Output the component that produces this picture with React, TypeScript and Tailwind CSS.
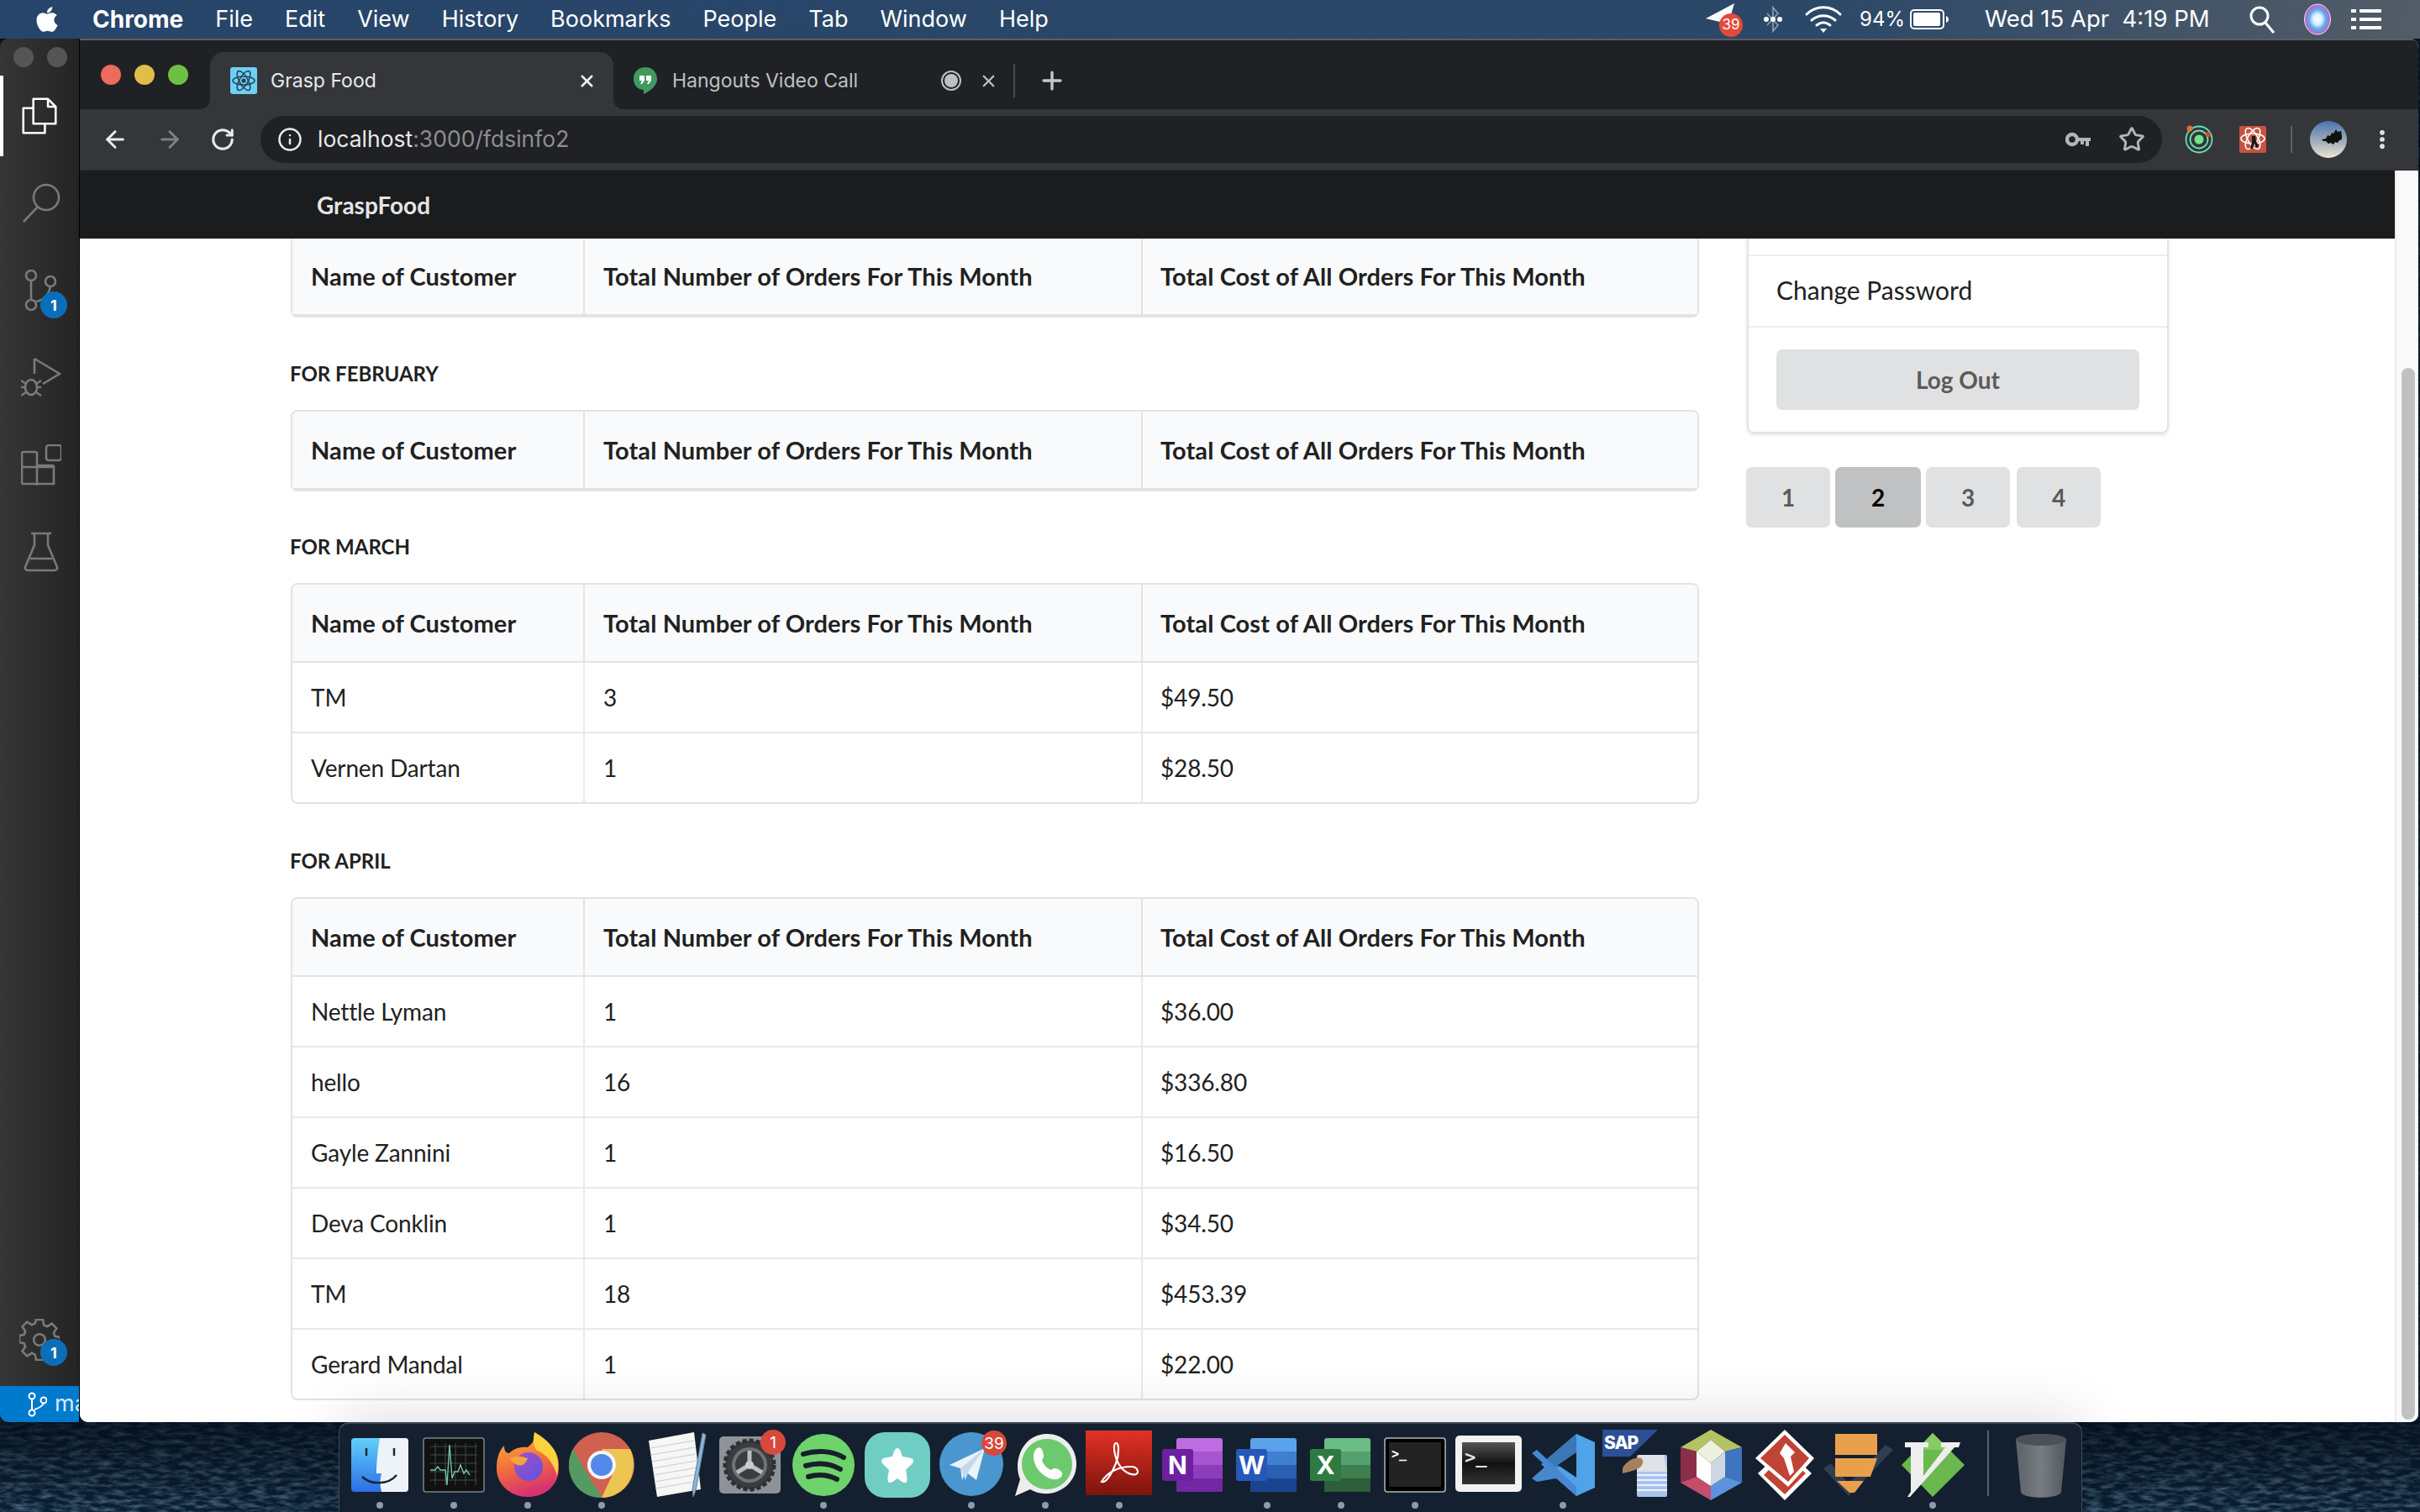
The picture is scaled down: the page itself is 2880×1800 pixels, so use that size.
import { ArrowLeft, ArrowRight, EllipsisVertical, Info, Plus, RotateCw, Star, X } from "lucide-react";
import { FaApple } from "react-icons/fa";

const customerHeaders = [
  "Name of Customer",
  "Total Number of Orders For This Month",
  "Total Cost of All Orders For This Month",
];

const marchRows = [
  ["TM", "3", "$49.50"],
  ["Vernen Dartan", "1", "$28.50"],
];

const aprilRows = [
  ["Nettle Lyman", "1", "$36.00"],
  ["hello", "16", "$336.80"],
  ["Gayle Zannini", "1", "$16.50"],
  ["Deva Conklin", "1", "$34.50"],
  ["TM", "18", "$453.39"],
  ["Gerard Mandal", "1", "$22.00"],
];

function OrdersTable({ rows = [] }: { rows?: string[][] }) {
  return (
    <table className="w-[1676px] table-fixed border-separate border-spacing-0 rounded-[8px] border-2 border-[#e3e3e4] text-[28px] leading-[34px] tracking-[-0.15px] text-[#212121]">
      <colgroup>
        <col className="w-[348px]" />
        <col className="w-[664px]" />
        <col className="w-[660px]" />
      </colgroup>
      <thead>
        <tr>
          {customerHeaders.map((header, i) => (
            <th
              key={header}
              className={
                i === 2
                  ? "h-[93px] rounded-tr-[6px] border-b-2 border-[#e3e3e4] bg-[#f9fafb] px-[21px] text-left text-[29px] font-bold tracking-[0.1px]"
                  : i === 0
                    ? "h-[93px] rounded-tl-[6px] border-r-2 border-b-2 border-[#e3e3e4] bg-[#f9fafb] px-[22px] text-left text-[29px] font-bold tracking-[0.1px]"
                    : "h-[93px] border-r-2 border-b-2 border-[#e3e3e4] bg-[#f9fafb] px-[22px] text-left text-[29px] font-bold tracking-[0.1px]"
              }
            >
              {header}
            </th>
          ))}
        </tr>
      </thead>
      <tbody>
        {rows.map((row, r) => {
          const last = r === rows.length - 1;
          return (
            <tr key={row[0] + r}>
              <td className={last ? "h-[82px] border-r-2 border-[#e9e9e9] px-[22px]" : "h-[84px] border-r-2 border-b-2 border-[#e9e9e9] px-[22px]"}>{row[0]}</td>
              <td className={last ? "h-[82px] border-r-2 border-[#e9e9e9] px-[22px]" : "h-[84px] border-r-2 border-b-2 border-[#e9e9e9] px-[22px]"}>{row[1]}</td>
              <td className={last ? "h-[82px] border-[#e9e9e9] px-[21px]" : "h-[84px] border-b-2 border-[#e9e9e9] px-[21px]"}>{row[2]}</td>
            </tr>
          );
        })}
      </tbody>
    </table>
  );
}

function MonthLabel({ children, className }: { children: React.ReactNode; className: string }) {
  return <div className={"-ml-px flex h-[30px] items-center text-[24px] font-bold text-[#212121] " + className}>{children}</div>;
}

function Sidebar() {
  return (
    <div className="ml-[56px] flex w-[430px] flex-col">
      <div className="ml-px w-[502px] rounded-b-[8px] border-x-2 border-b-2 border-[#e3e3e4] shadow-[0_2px_4px_rgba(34,36,38,0.12)]">
        <div className="h-[21px] border-b-2 border-[#ececec]" />
        <div className="flex h-[85px] items-center border-b-2 border-[#ececec] pb-[3px] pl-[33px] text-[30px] text-[#212121]">Change Password</div>
        <div className="px-[33px] pt-[26px] pb-[26px]">
          <div className="flex h-[72px] w-[432px] items-center justify-center rounded-[7px] bg-[#e0e1e2] text-[28px] font-bold text-[#5a5a5a]">Log Out</div>
        </div>
      </div>
      <div className="mt-[40px] flex w-[500px] gap-[6px] text-[28px] font-bold text-[#5a5a5a]">
        <div className="flex h-[72px] w-[100px] items-center justify-center rounded-[7px] bg-[#e0e1e2]">1</div>
        <div className="flex h-[72px] w-[102px] items-center justify-center rounded-[7px] bg-[#c0c1c2] text-black">2</div>
        <div className="flex h-[72px] w-[100px] items-center justify-center rounded-[7px] bg-[#e0e1e2]">3</div>
        <div className="ml-[2px] flex h-[72px] w-[100px] items-center justify-center rounded-[7px] bg-[#e0e1e2]">4</div>
      </div>
    </div>
  );
}

function PageContent() {
  return (
    <div className="flex min-h-0 flex-1">
      <div className="flex min-w-0 flex-1 overflow-hidden bg-white pl-[251px] font-['Lato',sans-serif]">
        <div className="-mt-[3px] flex w-[1676px] flex-col">
          <OrdersTable />
          <MonthLabel className="mt-[52px] mb-[28px]">FOR FEBRUARY</MonthLabel>
          <OrdersTable />
          <MonthLabel className="mt-[51px] mb-[28px]">FOR MARCH</MonthLabel>
          <OrdersTable rows={marchRows} />
          <MonthLabel className="mt-[53px] mb-[28px]">FOR APRIL</MonthLabel>
          <OrdersTable rows={aprilRows} />
        </div>
        <Sidebar />
      </div>
    </div>
  );
}

function Scrollbar() {
  return (
    <div className="w-[28px] border-l-2 border-[#ececec] bg-[#fafafa] pt-[235px] pl-[6px]">
      <div className="h-[1252px] w-[16px] rounded-full bg-[#c1c1c1]" />
    </div>
  );
}

function ReactFavicon() {
  return (
    <svg width="32" height="32" viewBox="0 0 32 32" className="shrink-0">
      <rect width="32" height="32" rx="3" fill="#6fd0f6" />
      <g fill="none" stroke="#23424f" strokeWidth="1.5">
        <ellipse cx="16" cy="16" rx="13" ry="5" />
        <ellipse cx="16" cy="16" rx="13" ry="5" transform="rotate(60 16 16)" />
        <ellipse cx="16" cy="16" rx="13" ry="5" transform="rotate(120 16 16)" />
      </g>
      <circle cx="16" cy="16" r="2.6" fill="#23424f" />
    </svg>
  );
}

function TabStrip() {
  return (
    <div className="flex h-[84px] border-t-2 border-[#5c5d60] bg-[#202124] pt-[14px]">
      <div className="flex h-[68px] w-[155px] items-center gap-[16px] pb-[14px] pl-[25px]">
        <div className="h-[24px] w-[24px] rounded-full bg-[#ed6a5e]" />
        <div className="h-[24px] w-[24px] rounded-full bg-[#e2bd4a]" />
        <div className="h-[24px] w-[24px] rounded-full bg-[#6ebf44]" />
      </div>
      <div className="relative flex h-[68px] w-[480px] items-center rounded-t-[16px] bg-[#35363a] pl-[24px] text-[#e8eaed]">
        <ReactFavicon />
        <span className="ml-[16px] text-[23px]">Grasp Food</span>
        <X className="absolute top-[23px] left-[437px] text-[#f1f3f4]" size={23} strokeWidth={2.6} />
        <div className="absolute bottom-0 -left-[12px] h-[12px] w-[12px] bg-[#35363a]">
          <div className="h-full w-full rounded-br-[12px] bg-[#202124]" />
        </div>
        <div className="absolute -right-[12px] bottom-0 h-[12px] w-[12px] bg-[#35363a]">
          <div className="h-full w-full rounded-bl-[12px] bg-[#202124]" />
        </div>
      </div>
      <div className="flex h-[68px] items-center text-[#bdc1c6]">
        <svg width="28" height="32" viewBox="0 0 28 32" className="ml-[24px] shrink-0">
          <path d="M14 0C6 0 0 6 0 14s6 13 12 13v5c8-4 16-10 16-18C28 6 22 0 14 0z" fill="#3f9a5f" />
          <path d="M7 10h6v6l-3 4h-2l2-4H7zM15 10h6v6l-3 4h-2l2-4h-3z" fill="#fff" />
        </svg>
        <span className="ml-[18px] w-[300px] text-[23px]">Hangouts Video Call</span>
        <svg width="26" height="26" viewBox="0 0 26 26" className="ml-[19px]">
          <circle cx="13" cy="13" r="11" fill="#202124" stroke="#bdc1c6" strokeWidth="2" />
          <circle cx="13" cy="13" r="8" fill="#bdc1c6" />
        </svg>
        <X className="ml-[20px]" size={23} strokeWidth={2.4} />
        <div className="ml-[18px] h-[40px] w-[2px] bg-[#4a4b4f]" />
        <Plus className="ml-[27px] text-[#c4c7c9]" size={34} strokeWidth={2.4} />
      </div>
    </div>
  );
}

function ExtensionIcons() {
  return (
    <>
      <svg width="36" height="36" viewBox="0 0 36 36" className="ml-[26px] shrink-0">
        <circle cx="18" cy="18" r="15.5" fill="none" stroke="#68e3b4" strokeWidth="1.8" />
        <circle cx="18" cy="18" r="10.5" fill="none" stroke="#68e3b4" strokeWidth="1.8" />
        <circle cx="18" cy="18" r="5.5" fill="#72e48f" />
        <circle cx="7" cy="5" r="3.5" fill="#e0702b" />
        <circle cx="29" cy="12" r="3" fill="#d24b2b" />
      </svg>
      <svg width="32" height="32" viewBox="0 0 32 32" className="ml-[30px] shrink-0">
        <rect width="32" height="32" rx="2" fill="#c85340" />
        <g fill="none" stroke="#fff" strokeWidth="1.6">
          <ellipse cx="16" cy="15" rx="14" ry="6" />
          <ellipse cx="16" cy="15" rx="14" ry="6" transform="rotate(60 16 15)" />
          <ellipse cx="16" cy="15" rx="14" ry="6" transform="rotate(120 16 15)" />
        </g>
        <path d="M15 12h4l1 6 3 6-3 2-2-5-2 6h-3l2-8z" fill="#1a1a1a" />
      </svg>
      <div className="ml-[29px] h-[32px] w-[2px] bg-[#5f6063]" />
      <svg width="44" height="44" viewBox="0 0 44 44" className="ml-[21px] shrink-0">
        <defs>
          <linearGradient id="avatarSky" x1="0" y1="0" x2="0" y2="1">
            <stop offset="0" stopColor="#4c73ad" />
            <stop offset="0.6" stopColor="#a7b3bb" />
            <stop offset="1" stopColor="#ece6cf" />
          </linearGradient>
        </defs>
        <circle cx="22" cy="22" r="22" fill="url(#avatarSky)" />
        <path d="M14 22l5-1 2-4 3 1 2-4 2 1 3-5 2 3 4-1 1 5 0 5-3 1-2 3-3-1-2 3-3-2-3 1-3-3-3 0z" fill="#111" />
      </svg>
      <EllipsisVertical className="ml-[28px] text-[#e8eaed]" size={28} strokeWidth={2.8} />
    </>
  );
}

function Toolbar() {
  return (
    <div className="flex h-[73px] items-center border-b border-[#2b2c2f] bg-[#35363a] pl-[26px]">
      <ArrowLeft className="shrink-0 text-[#e8eaed]" size={32} strokeWidth={2.2} />
      <ArrowRight className="ml-[33px] shrink-0 text-[#7f8184]" size={32} strokeWidth={2.2} />
      <RotateCw className="ml-[32px] shrink-0 text-[#e8eaed]" size={30} strokeWidth={2.4} />
      <div className="ml-[30px] flex h-[56px] w-[2263px] shrink-0 items-center rounded-full bg-[#202124] pr-[20px] pl-[20px]">
        <Info className="text-[#e8eaed]" size={30} strokeWidth={2} />
        <span className="ml-[18px] text-[26.5px] text-[#e8eaed]">
          localhost<span className="text-[#8c8e91]">:3000/fdsinfo2</span>
        </span>
        <svg width="30" height="18" viewBox="0 0 30 18" className="ml-auto">
          <circle cx="8" cy="9" r="6" fill="none" stroke="#b4b5b6" strokeWidth="4.4" />
          <path d="M14 7h16v4h-2v6h-4v-6h-2v4h-4v-4h-4z" fill="#b4b5b6" />
        </svg>
        <Star className="ml-[33px] text-[#b4b5b6]" size={32} strokeWidth={2.2} />
      </div>
      <ExtensionIcons />
    </div>
  );
}

function ChromeWindow() {
  return (
    <div className="flex w-[2783px] flex-col overflow-hidden rounded-tr-[10px] rounded-br-[10px] rounded-bl-[10px] bg-white">
      <TabStrip />
      <Toolbar />
      <div className="flex min-h-0 flex-1">
        <div className="flex min-w-0 flex-1 flex-col">
          <div className="flex h-[81px] items-center bg-[#1b1c1e] pl-[282px] font-['Lato',sans-serif] text-[28px] font-bold text-[#e4e4e4]">GraspFood</div>
          <PageContent />
        </div>
        <Scrollbar />
      </div>
    </div>
  );
}

function ActivityIcon({ children }: { children: React.ReactNode }) {
  return (
    <div className="relative flex h-[96px] items-center justify-center border-l-4 border-transparent">
      <svg width="48" height="50" viewBox="0 0 48 50" fill="none" stroke="#7a7a7a" strokeWidth="2.6">
        {children}
      </svg>
    </div>
  );
}

function CountBadge({ className }: { className: string }) {
  return <div className={"absolute flex h-[32px] w-[32px] items-center justify-center rounded-full bg-[#0a6fb8] font-['Inter',sans-serif] text-[18px] font-bold text-white " + className}>1</div>;
}

function VsCodeSliver() {
  return (
    <div className="flex w-[95px] flex-col rounded-tl-[10px] rounded-bl-[10px] border-r border-black bg-linear-to-r from-[#363636] to-[#242424]">
      <div className="flex h-[44px] items-start gap-[16px] pt-[10px] pl-[16px]">
        <div className="h-[24px] w-[24px] rounded-full bg-[#555]" />
        <div className="h-[24px] w-[24px] rounded-full bg-[#555]" />
      </div>
      <div className="flex flex-col gap-[8px]">
        <div className="flex h-[96px] items-center justify-center border-l-4 border-white pr-[4px]">
          <svg width="44" height="48" viewBox="0 0 48 50" fill="none" stroke="#fff" strokeWidth="2.8" strokeLinejoin="round">
            <path d="M16 3h19l10 10v22H16z" />
            <path d="M35 3v10h10" />
            <path d="M16 15H3v32h28V35" />
          </svg>
        </div>
        <ActivityIcon>
          <circle cx="30" cy="18" r="15" />
          <path d="M20 29L3 47" />
        </ActivityIcon>
        <div className="relative flex h-[96px] items-center justify-center border-l-4 border-transparent">
          <svg width="48" height="50" viewBox="0 0 48 50" fill="none" stroke="#7a7a7a" strokeWidth="2.6">
            <circle cx="12" cy="7" r="6" />
            <circle cx="12" cy="42" r="6" />
            <circle cx="35" cy="14" r="6" />
            <path d="M12 13v23M18 38c10-2 15-8 17-18" />
          </svg>
          <CountBadge className="top-[49px] left-[44px]" />
        </div>
        <ActivityIcon>
          <path d="M16 2l30 18-20 12M16 2v18" />
          <ellipse cx="12" cy="36" rx="7" ry="9" />
          <path d="M0 28l6 4M24 28l-6 4M0 36h5M24 36h-5M0 46l6-4M24 46l-6-4" />
        </ActivityIcon>
        <ActivityIcon>
          <rect x="30" y="1" width="18" height="18" rx="3" />
          <path d="M3 9h14a2 2 0 0 1 2 2v14h18a2 2 0 0 1 2 2v20H3a2 2 0 0 1-2-2V11a2 2 0 0 1 2-2zM1 27h38M19 25v24" />
        </ActivityIcon>
        <ActivityIcon>
          <path d="M12 2h24M16 2v14L5 42a3 3 0 0 0 3 4h32a3 3 0 0 0 3-4L32 16V2M11 32h26" />
        </ActivityIcon>
      </div>
      <div className="relative mt-auto flex h-[104px] justify-center pt-[24px]">
        <svg width="48" height="50" viewBox="0 0 24 24" fill="none" stroke="#7a7a7a" strokeWidth="1.3">
          <path d="M10 1h4l.6 3.2 2 .9 2.8-1.8 2.8 2.9-1.8 2.7.8 2 3.1.6v4l-3.1.6-.8 2 1.8 2.7-2.8 2.9-2.8-1.8-2 .9L14 25h-4l-.6-3.2-2-.9-2.8 1.8-2.8-2.9 1.8-2.7-.8-2L0 14.500v-4l2.800-.6.8-2L1.800 5.200 4.600 2.300l2.800 1.800 2-.9z" transform="translate(0 -1)" />
          <circle cx="12" cy="12" r="3.4" />
        </svg>
        <CountBadge className="top-[48px] left-[48px]" />
      </div>
      <div className="flex h-[43px] items-center gap-[9px] overflow-hidden rounded-bl-[10px] bg-[#007acc] pl-[32px] font-['Inter',sans-serif] text-[27px] text-[#d5e9f7]">
        <svg width="24" height="30" viewBox="0 0 24 30" fill="none" stroke="#fff" strokeWidth="2" className="shrink-0">
          <circle cx="6" cy="5" r="3.5" />
          <circle cx="6" cy="25" r="3.500" />
          <circle cx="20" cy="10" r="3.5" />
          <path d="M6 8.500v13M9 21c6-2 10-5 11-7.500" />
        </svg>
        <span>ma</span>
      </div>
    </div>
  );
}

function MenuBar() {
  return (
    <div className="flex h-[46px] items-center bg-linear-to-r from-[#27456a] via-[#2b4868] via-75% to-[#525c66] font-['Inter',sans-serif] text-[27px] text-white">
      <FaApple className="ml-[39px] shrink-0" size={34} />
      <div className="ml-[37px] flex items-center gap-[38px]">
        <span className="text-[28px] font-bold">Chrome</span>
        <span>File</span>
        <span>Edit</span>
        <span>View</span>
        <span>History</span>
        <span>Bookmarks</span>
        <span>People</span>
        <span>Tab</span>
        <span>Window</span>
        <span>Help</span>
      </div>
      <div className="ml-auto flex items-center pr-[46px]">
        <div className="relative h-[42px] w-[48px]">
          <svg width="48" height="36" viewBox="0 0 48 36">
            <path d="M2 20L36 2 26 36l-7-12z" fill="#fff" />
          </svg>
          <div className="absolute top-[14px] left-[18px] flex h-[28px] w-[28px] items-center justify-center rounded-full bg-[#e5493a] text-[17px]">39</div>
        </div>
        <svg width="24" height="34" viewBox="0 0 24 34" fill="none" stroke="#8ea4bb" strokeWidth="1.6" className="ml-[22px]">
          <path d="M5 10l13 14-6 7V3l6 7L5 24" />
          <g fill="#fff" stroke="none">
            <circle cx="4" cy="17" r="3" />
            <circle cx="12" cy="17" r="3" />
            <circle cx="20" cy="17" r="3" />
          </g>
        </svg>
        <svg width="46" height="34" viewBox="0 0 46 34" fill="none" stroke="#fff" strokeWidth="3" strokeLinecap="round" className="ml-[25px]">
          <path d="M3 11c11-11 29-11 40 0M9 18c8-7 20-7 28 0M15 24c5-4 11-4 16 0" />
          <path d="M19 28h8l-4 5z" fill="#fff" stroke="none" />
        </svg>
        <span className="ml-[20px] w-[50px] text-[24px] whitespace-nowrap">94%</span>
        <svg width="46" height="24" viewBox="0 0 46 24" className="ml-[10px]">
          <rect x="1" y="1" width="39" height="22" rx="4" fill="none" stroke="#fff" strokeWidth="2" />
          <rect x="4" y="4" width="32" height="16" rx="2" fill="#fff" />
          <path d="M43 8c2 1 3 2 3 4s-1 3-3 4z" fill="#fff" />
        </svg>
        <span className="ml-[43px] w-[268px] text-[27.5px] whitespace-pre">Wed 15 Apr  4:19 PM</span>
        <svg width="32" height="34" viewBox="0 0 32 34" fill="none" stroke="#fff" strokeWidth="3" className="ml-[46px]">
          <circle cx="13" cy="13" r="10" />
          <path d="M20 21l10 12" />
        </svg>
        <svg width="32" height="38" viewBox="0 0 32 38" className="ml-[34px]">
          <defs>
            <radialGradient id="siriGlow">
              <stop offset="0" stopColor="#fff" />
              <stop offset="0.35" stopColor="#d9f1fb" />
              <stop offset="0.65" stopColor="#5fa8f0" />
              <stop offset="1" stopColor="#c55fc0" />
            </radialGradient>
          </defs>
          <ellipse cx="16" cy="19" rx="15.5" ry="18" fill="url(#siriGlow)" stroke="#e6e6e6" strokeWidth="1" />
        </svg>
        <svg width="36" height="24" viewBox="0 0 36 24" fill="#fff" className="ml-[24px]">
          <rect y="0" width="6" height="4" />
          <rect x="10" y="0" width="26" height="4" />
          <rect y="10" width="6" height="4" />
          <rect x="10" y="10" width="26" height="4" />
          <rect y="20" width="6" height="4" />
          <rect x="10" y="20" width="26" height="4" />
        </svg>
      </div>
    </div>
  );
}

function DockBadge({ cx, cy, label }: { cx: number; cy: number; label: string }) {
  return (
    <>
      <circle cx={cx} cy={cy} r="15" fill="#d9483c" />
      <text x={cx} y={cy + 7} textAnchor="middle" fontFamily="Inter, sans-serif" fontSize="19" fill="#fff">
        {label}
      </text>
    </>
  );
}

function OfficeIcon({ light, mid, dark, deep, tile, letter }: { light: string; mid: string; dark: string; deep: string; tile: string; letter: string }) {
  return (
    <>
      <rect x="24" y="12" width="55" height="64" rx="3" fill={light} />
      <rect x="24" y="28" width="55" height="16" fill={mid} />
      <rect x="24" y="44" width="55" height="16" fill={dark} />
      <path d="M24 60h55v13a3 3 0 0 1-3 3H27a3 3 0 0 1-3-3z" fill={deep} />
      <rect x="7" y="25" width="37" height="38" rx="3" fill={tile} />
      <text x="25.500" y="55" textAnchor="middle" fontFamily="Inter, sans-serif" fontWeight="700" fontSize="30" fill="#fff">
        {letter}
      </text>
    </>
  );
}

const dockIcons: { key: string; running?: boolean; art: React.ReactNode }[] = [
  {
    key: "finder",
    running: true,
    art: (
      <>
        <defs>
          <linearGradient id="finderBlue" x1="0" y1="0" x2="0" y2="1">
            <stop offset="0" stopColor="#62d0fa" />
            <stop offset="1" stopColor="#2b6fe6" />
          </linearGradient>
        </defs>
        <rect x="10" y="12" width="68" height="64" rx="4" fill="url(#finderBlue)" />
        <path d="M44 12h30a4 4 0 0 1 4 4v56a4 4 0 0 1-4 4H46c-2-8-2-14 0-22h-6c0-16 2-30 4-42z" fill="#eef3f9" />
        <path d="M28 24v9M61 24v9" stroke="#1d2733" strokeWidth="2.5" />
        <path d="M23 58c10 10 31 10 41-2" fill="none" stroke="#1d2733" strokeWidth="2.5" />
      </>
    ),
  },
  {
    key: "activity",
    running: true,
    art: (
      <>
        <rect x="8" y="12" width="72" height="64" rx="3" fill="#111" stroke="#7a8288" strokeWidth="1.5" />
        <path d="M16 22h56M16 32h56M16 42h56M16 52h56M16 62h56M22 18v50M34 18v50M46 18v50M58 18v50M70 18v50" stroke="#3e4d49" strokeWidth="1" />
        <path d="M16 50h6l3-4 3 4h6l2 18 3-48 3 40 3-8h4l3-8 4 10 3-4 4 6" fill="none" stroke="#74c4a8" strokeWidth="1.4" />
      </>
    ),
  },
  {
    key: "firefox",
    running: true,
    art: (
      <>
        <defs>
          <linearGradient id="foxBody" x1="0" y1="0" x2="0.3" y2="1">
            <stop offset="0" stopColor="#fbbd3d" />
            <stop offset="0.55" stopColor="#f2703a" />
            <stop offset="1" stopColor="#d9336f" />
          </linearGradient>
          <linearGradient id="foxGlobe" x1="0" y1="0" x2="1" y2="1">
            <stop offset="0" stopColor="#a74fc8" />
            <stop offset="1" stopColor="#5c53e0" />
          </linearGradient>
        </defs>
        <path d="M7 48c0-10 2-20 9-27 0 6 2 9 6 9 6-6 14-8 22-7 8-6 9-12 8-18 10 6 18 12 24 22 5 8 5 14 5 21 0 20-16 34-37 34S7 67 7 48z" fill="url(#foxBody)" />
        <path d="M52 5c10 6 18 12 24 22 5 8 5 20 3 30-4-14-12-26-24-30-6-8-4-16-3-22z" fill="#fcd23f" />
        <circle cx="45" cy="46" r="17" fill="url(#foxGlobe)" />
        <path d="M23 36c8-4 16-2 21 0-2 6-6 10-12 8-4-1-7-4-9-8z" fill="#f6a43c" />
      </>
    ),
  },
  {
    key: "chrome",
    running: true,
    art: (
      <>
        <circle cx="44" cy="44" r="39" fill="#d0604f" />
        <path d="M10 25L30 60l15 23C22 84 5 66 5 44c0-7 2-13 5-19z" fill="#559a62" />
        <path d="M44 25h34c3 6 4 12 4 19 0 22-17 39-38 39l16-34z" fill="#ecc552" />
        <circle cx="44" cy="44" r="17" fill="#f4f6fa" />
        <circle cx="44" cy="44" r="13" fill="#5589e9" />
      </>
    ),
  },
  {
    key: "notes",
    art: (
      <>
        <path d="M12 15L66 5l8 68-52 9z" fill="#f6f6f4" />
        <path d="M14 24l52-9M15 32l52-9M16 40l52-9M17 48l52-9M18 56l52-9M19 64l52-9M20 72l52-9" stroke="#c6cdd8" strokeWidth="1" />
        <path d="M76 6l4 2-12 66-3 8-1-9z" fill="#8fb4d6" stroke="#5c7f9f" strokeWidth="1" />
      </>
    ),
  },
  {
    key: "prefs",
    art: (
      <>
        <rect x="8" y="10" width="73" height="68" rx="5" fill="#8d9398" />
        <circle cx="44" cy="44" r="29" fill="#3a3d40" stroke="#2d2f31" strokeWidth="5" strokeDasharray="5 3" />
        <circle cx="44" cy="44" r="21" fill="#6f7478" />
        <circle cx="44" cy="44" r="17" fill="#3a3d40" />
        <path d="M44 44V27M44 44L29 53M44 44l15 9" stroke="#b9bdc0" strokeWidth="5" />
        <circle cx="44" cy="44" r="5" fill="#c9cccf" />
        <DockBadge cx={72} cy={17} label="1" />
      </>
    ),
  },
  {
    key: "spotify",
    running: true,
    art: (
      <>
        <circle cx="44" cy="44" r="37" fill="#6fd36c" />
        <path d="M20 31c16-5 34-4 48 4M23 45c14-4 29-3 41 4M26 58c11-3 24-2 34 3" fill="none" stroke="#17202a" strokeWidth="6" strokeLinecap="round" />
      </>
    ),
  },
  {
    key: "star",
    art: (
      <>
        <rect x="5" y="5" width="78" height="78" rx="24" fill="#70cdc4" />
        <path d="M44 24c3 0 4 4 6 10 6 1 13 1 13 5s-6 7-9 11c1 6 3 13 0 15-3 1-7-3-10-5-3 2-7 6-10 5-3-2-1-9 0-15-3-4-9-7-9-11s7-4 13-5c2-6 3-10 6-10z" fill="#fff" />
      </>
    ),
  },
  {
    key: "telegram",
    running: true,
    art: (
      <>
        <circle cx="44" cy="43" r="38" fill="#4a97d0" />
        <path d="M18 44l42-20-10 38-13-10-4 10-2-14z" fill="#eaf3fa" />
        <path d="M60 24L31 48l6 14 4-11z" fill="#c4d9ea" />
        <DockBadge cx={71} cy={18} label="39" />
      </>
    ),
  },
  {
    key: "whatsapp",
    running: true,
    art: (
      <>
        <path d="M8 81l6-20C5 40 17 7 46 7c20 0 35 16 35 36 0 28-32 44-55 30z" fill="#ededed" />
        <circle cx="46" cy="43" r="30" fill="#6dc96d" />
        <path d="M34 24c3-2 6 0 7 4s2 7-1 10c2 6 6 10 11 12 4-3 6-2 10 0 4 3 4 6 1 9-8 6-20-1-27-10-6-9-7-20-1-25z" fill="#fff" />
      </>
    ),
  },
  {
    key: "acrobat",
    running: true,
    art: (
      <>
        <defs>
          <linearGradient id="acrobatRed" x1="0" y1="0" x2="0" y2="1">
            <stop offset="0" stopColor="#e33225" />
            <stop offset="1" stopColor="#7a140d" />
          </linearGradient>
        </defs>
        <rect x="4" y="3" width="79" height="77" fill="url(#acrobatRed)" />
        <path d="M23 64c6 2 12-10 17-22 4-10 4-25 0-24-4 1-2 16 4 26 5 8 14 13 20 11 4-2 2-9-6-9-14 0-28 6-35 18z" fill="none" stroke="#fff" strokeWidth="2.2" />
      </>
    ),
  },
  {
    key: "onenote",
    art: <OfficeIcon light="#bd6ce2" mid="#a855d2" dark="#8d3dbc" deep="#7427a4" tile="#6d20a0" letter="N" />,
  },
  {
    key: "word",
    running: true,
    art: <OfficeIcon light="#5aa3ea" mid="#3f7fd0" dark="#2a5fb2" deep="#1b4490" tile="#2558b8" letter="W" />,
  },
  {
    key: "excel",
    running: true,
    art: <OfficeIcon light="#69bd85" mid="#55a06f" dark="#3f7f4d" deep="#2d5f3a" tile="#2f7a43" letter="X" />,
  },
  {
    key: "terminal",
    running: true,
    art: (
      <>
        <rect x="8" y="12" width="72" height="64" rx="3" fill="#000" stroke="#b0b4b8" strokeWidth="1.5" />
        <rect x="13" y="17" width="62" height="53" fill="#232323" />
        <text x="16" y="36" fontFamily="'DejaVu Sans Mono', monospace" fontSize="15" fontWeight="700" fill="#fff">
          {">_"}
        </text>
      </>
    ),
  },
  {
    key: "iterm",
    art: (
      <>
        <defs>
          <linearGradient id="itermGlass" x1="0" y1="0" x2="0" y2="1">
            <stop offset="0" stopColor="#555" />
            <stop offset="0.5" stopColor="#111" />
            <stop offset="1" stopColor="#333" />
          </linearGradient>
        </defs>
        <rect x="4" y="9" width="79" height="67" rx="5" fill="#f2f2f2" />
        <rect x="12" y="17" width="63" height="50" fill="url(#itermGlass)" />
        <text x="15" y="42" fontFamily="'DejaVu Sans Mono', monospace" fontSize="22" fontWeight="700" fill="#e4e4e4">
          {">_"}
        </text>
      </>
    ),
  },
  {
    key: "vscode",
    running: true,
    art: (
      <>
        <path d="M60 7l22 10v54L60 81 18 43z" fill="#4fa3e8" />
        <path d="M60 7v22L38 47 18 43z" fill="#3b78b8" />
        <path d="M7 30l6-4 47 44v11L36 60 13 64 7 60l17-15z" fill="#4787cf" />
        <path d="M60 29v30L38 44z" fill="#14202f" />
      </>
    ),
  },
  {
    key: "sap",
    art: (
      <>
        <path d="M3 2h66L36 34H3z" fill="#2c4f95" />
        <text x="5" y="25" fontFamily="Inter, sans-serif" fontWeight="800" fontSize="21" letterSpacing="-1" fill="#fff">
          SAP
        </text>
        <rect x="44" y="32" width="36" height="50" rx="2" fill="#a9c4ee" />
        <path d="M44 56h36M44 62h36M44 68h36M44 74h36" stroke="#eef3fb" strokeWidth="2" />
        <path d="M46 32h30l4 20H44z" fill="#dfe2e6" />
        <path d="M27 48c4-8 14-14 22-12 4 2 2 10-3 12-6 3-12 4-19 6z" fill="#a5815e" />
      </>
    ),
  },
  {
    key: "gem",
    art: (
      <>
        <path d="M44 2l37 21-20 5-17-14-17 14-19-5z" fill="#b4c264" />
        <path d="M8 23l19 5v30L8 65z" fill="#8c2e48" />
        <path d="M81 23l-20 5v30l20 7z" fill="#3f74c0" />
        <path d="M8 65l19-7 17 11v17z" fill="#c54d6c" />
        <path d="M81 65l-20-7-17 11v17z" fill="#5b93dc" />
        <path d="M44 14l17 14-17 14-17-14z" fill="#eef0de" />
        <path d="M27 28l17 14v27L27 58z" fill="#fff" />
        <path d="M61 28L44 42v27l17-11z" fill="#cfd8e2" />
      </>
    ),
  },
  {
    key: "diamond",
    art: (
      <>
        <path d="M44 24l32 30-32 32-32-32z" fill="#fff" />
        <path d="M44 31l25 23-25 25-25-23z" fill="#c04436" />
        <path d="M44 2l35 34-31 34L9 36z" fill="#fff" />
        <path d="M44 8l29 28-25 28L15 36z" fill="#c04436" />
        <path d="M45 18l11 11-5 5 4 18-5 5-7-21-5-6z" fill="#fff" />
      </>
    ),
  },
  {
    key: "check",
    art: (
      <>
        <path d="M2 48l9-6 21 24 44-46 9 6-53 55z" fill="#2f3e50" />
        <rect x="16" y="7" width="50" height="25" fill="#ea9f4d" />
        <path d="M16 36h50l-8 22H16z" fill="#ea9f4d" />
        <path d="M18 63h32L39 77h-6z" fill="#ea9f4d" />
      </>
    ),
  },
  {
    key: "vim",
    running: true,
    art: (
      <>
        <path d="M44 6l38 38-38 38L7 44z" fill="#6bb84e" />
        <path d="M44 6l20 20H25z" fill="#86cb64" />
        <path d="M11 17h28v6h-6v34l26-34h-5v-6h23l-2 6h-5L17 82h-3l4-6V23h-7z" fill="#eeeeee" />
      </>
    ),
  },
];

function Dock() {
  return (
    <div className="relative z-10 ml-[403px] flex h-[107px] w-[2075px] rounded-t-[12px] border-x border-t-2 border-[#3d4956] bg-[#14202f] pt-[5px] pl-[4px] shadow-[0_-4px_70px_rgba(0,0,0,0.14)]">
      {dockIcons.map((icon) => (
        <div key={icon.key} className="flex w-[88px] flex-col items-center">
          <svg width="88" height="88" viewBox="0 0 88 88">
            {icon.art}
          </svg>
          {icon.running && <div className="h-[8px] w-[8px] rounded-full bg-[#8b9bb0]" />}
        </div>
      ))}
      <div className="mt-[3px] ml-[21px] h-[78px] w-[2px] bg-[#566372]" />
      <svg width="88" height="88" viewBox="0 0 88 88" className="ml-[18px]">
        <defs>
          <linearGradient id="binGlass" x1="0" y1="0" x2="1" y2="0">
            <stop offset="0" stopColor="#5c6268" />
            <stop offset="0.5" stopColor="#787d83" />
            <stop offset="1" stopColor="#51575d" />
          </linearGradient>
        </defs>
        <path d="M14 14c0-9 60-9 60 0l-6 62c-1 9-47 9-48 0z" fill="url(#binGlass)" />
        <ellipse cx="44" cy="14" rx="29" ry="7" fill="#4b5157" />
      </svg>
    </div>
  );
}

function Wallpaper() {
  return (
    <svg className="absolute inset-0 h-full w-full" aria-hidden="true">
      <defs>
        <filter id="seaNoise">
          <feTurbulence type="fractalNoise" baseFrequency="0.06 0.2" numOctaves="5" seed="7" />
          <feColorMatrix values="0 0 0 0 0.2  0 0 0 0 0.33  0 0 0 0 0.47  1.3 0 0 0 -0.5" />
        </filter>
        <linearGradient id="seaShade" x1="0" y1="0" x2="0" y2="1">
          <stop offset="0.94" stopColor="#020a14" stopOpacity="0.7" />
          <stop offset="1" stopColor="#020a14" stopOpacity="0" />
        </linearGradient>
      </defs>
      <rect width="100%" height="100%" fill="#0a1f33" />
      <rect width="100%" height="100%" filter="url(#seaNoise)" />
      <rect width="100%" height="100%" fill="url(#seaShade)" />
    </svg>
  );
}

export default function App() {
  return (
    <div className="relative flex h-[1800px] w-[2880px] flex-col overflow-hidden font-['Inter',sans-serif]">
      <Wallpaper />
      <div className="relative">
        <MenuBar />
      </div>
      <div className="relative flex h-[1647px] pr-[2px]">
        <VsCodeSliver />
        <ChromeWindow />
      </div>
      <Dock />
    </div>
  );
}
